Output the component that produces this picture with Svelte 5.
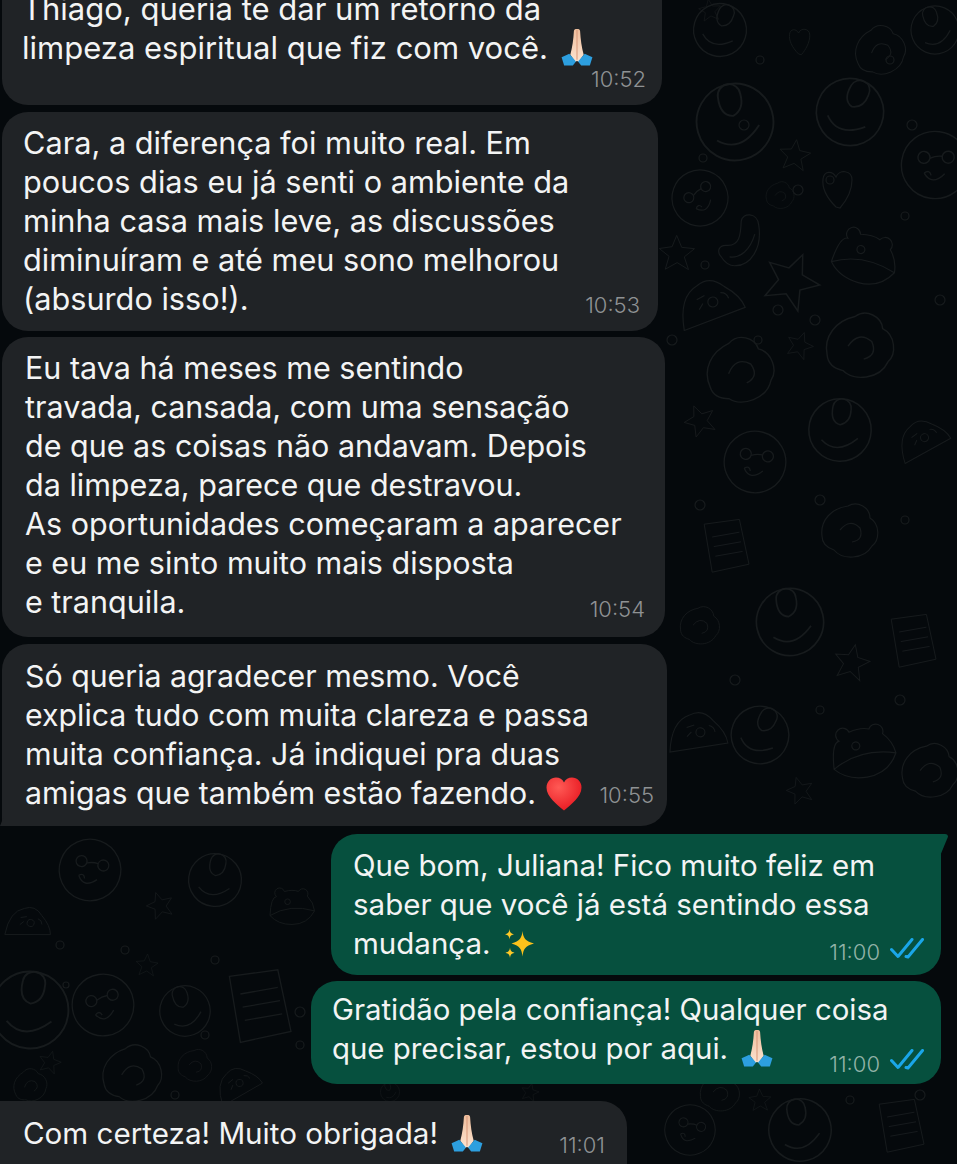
<script>
	// layout of each message comes from the data, only the doodles are placed freely
	const messages = [
		{ lines: ['Thiago, queria te dar um retorno da', 'limpeza espiritual que fiz com você.'], emoji: 'pray', time: '10:52', cls: 'm1' },
		{ lines: ['Cara, a diferença foi muito real. Em', 'poucos dias eu já senti o ambiente da', 'minha casa mais leve, as discussões', 'diminuíram e até meu sono melhorou', '(absurdo isso!).'], time: '10:53', cls: 'm2' },
		{ lines: ['Eu tava há meses me sentindo', 'travada, cansada, com uma sensação', 'de que as coisas não andavam. Depois', 'da limpeza, parece que destravou.', 'As oportunidades começaram a aparecer', 'e eu me sinto muito mais disposta', 'e tranquila.'], time: '10:54', cls: 'm3' },
		{ lines: ['Só queria agradecer mesmo. Você', 'explica tudo com muita clareza e passa', 'muita confiança. Já indiquei pra duas', 'amigas que também estão fazendo.'], emoji: 'heart', time: '10:55', cls: 'm4' },
		{ lines: ['Que bom, Juliana! Fico muito feliz em', 'saber que você já está sentindo essa', 'mudança.'], emoji: 'spark', time: '11:00', out: true, cls: 'm5' },
		{ lines: ['Gratidão pela confiança! Qualquer coisa', 'que precisar, estou por aqui.'], emoji: 'pray', time: '11:00', out: true, cls: 'm6' },
		{ lines: ['Com certeza! Muito obrigada!'], emoji: 'pray', time: '11:01', cls: 'm7' }
	];

	const doodles = [
		['face', 700, 198, 1], ['heart', 838, 187, 1], ['star', 677, 253, 0.8], ['macaroni', 748, 240, 1],
		['star', 792, 280, 1.25], ['bear', 863, 255, 1], ['dome', 713, 305, 1], ['ring', 735, 122, 1.6],
		['ring', 850, 112, 1.4], ['face', 935, 165, 1.2], ['blob', 860, 345, 1.2], ['blob', 740, 370, 1.2],
		['star', 800, 345, 0.6], ['star', 795, 155, 0.7], ['blob', 780, 195, 0.5], ['blob', 880, 50, 0.9],
		['ring', 720, 30, 1.1], ['heart', 800, 40, 0.7], ['star', 710, 10, 0.5], ['ring', 935, 30, 1],
		['face', 755, 462, 1.1], ['ring', 840, 430, 1.3], ['dome', 925, 440, 0.8], ['star', 700, 420, 0.7],
		['note', 725, 545, 0.8], ['blob', 850, 530, 1], ['ring', 790, 622, 1.4], ['note', 912, 640, 0.8],
		['star', 852, 662, 0.8], ['blob', 700, 625, 0.7], ['bear', 860, 750, 1], ['ring', 760, 735, 1.2],
		['dome', 700, 735, 0.9], ['blob', 930, 770, 1], ['star', 800, 790, 0.6],
		['face', 90, 870, 1.1], ['ring', 215, 880, 1.1], ['bear', 290, 905, 0.7], ['star', 160, 905, 0.6],
		['dome', 30, 925, 0.7], ['ring', 30, 1010, 1.6], ['face', 103, 1005, 1.1],
		['ring', 185, 1011, 1.05], ['note', 258, 1005, 1.1], ['star', 147, 965, 0.5], ['blob', 132, 1073, 1.05],
		['blob', 30, 1085, 0.6], ['star', 50, 1062, 0.5], ['blob', 195, 1065, 0.6], ['dome', 240, 1085, 0.7],
		['ring', 390, 1092, 0.4], ['star', 530, 1092, 0.4], ['blob', 720, 1092, 0.7], ['ring', 800, 1130, 1.3],
		['face', 690, 1130, 0.9], ['note', 900, 1125, 0.8], ['star', 760, 1100, 0.5]
	];
	const dots = [
		[798, 190, 5], [703, 158, 4], [744, 125, 5], [830, 180, 4], [758, 340, 4], [778, 310, 5],
		[705, 265, 4], [940, 300, 5], [905, 216, 4], [912, 125, 5], [672, 340, 5], [815, 320, 5],
		[890, 60, 4], [760, 60, 4], [700, 505, 5], [820, 500, 5], [905, 520, 4], [735, 680, 5],
		[820, 710, 4], [900, 700, 5], [60, 945, 4], [125, 950, 4], [205, 1035, 4], [300, 1012, 5],
		[300, 1045, 4], [215, 960, 4], [66, 985, 3], [175, 1095, 4], [850, 1100, 4], [920, 1095, 5]
	];
	const tilt = (i) => (i * 37) % 50 - 25;
</script>

{#snippet emoji(name)}
	{#if name === 'pray'}
		<svg class="emoji pray" viewBox="0 0 32 36" aria-hidden="true">
			<defs>
				<linearGradient id="skin" x1="0" y1="0" x2="0" y2="1">
					<stop offset="0" stop-color="#eebd9b" />
					<stop offset="1" stop-color="#fce3d0" />
				</linearGradient>
			</defs>
			<path d="M16 0c-1.500 0-2.800 .3-3 2C12.500 10 11.500 18 9.500 25L14.500 32l1.500-1z" fill="url(#skin)" />
			<path d="M16 0c1.500 0 2.800 .3 3 2C19.500 10 20.500 18 22.500 25L17.500 32l-1.500-1z" fill="url(#skin)" />
			<path d="M16 1v29" stroke="#d8987a" stroke-width="1" />
			<path d="M1 27.500L8.500 24l6.500 7.500-3 4H3.500z" fill="#2d9fdf" />
			<path d="M31 27.500L23.500 24 17 31.500l3 4h8.500z" fill="#2d9fdf" />
		</svg>
	{:else if name === 'heart'}
		<svg class="emoji heart" viewBox="0 0 36 34" aria-hidden="true">
			<defs>
				<radialGradient id="red" cx=".35" cy=".3" r=".85">
					<stop offset="0" stop-color="#ff5a55" />
					<stop offset="1" stop-color="#e5111b" />
				</radialGradient>
			</defs>
			<path d="M18 33.500C11 27.500 .5 20 .5 10.500.5 4.500 5 .5 10 .5c3.500 0 6.500 1.800 8 5 1.500-3.200 4.500-5 8-5 5 0 9.500 4 9.500 10 0 9.500-10.500 17-17.500 23z" fill="url(#red)" />
		</svg>
	{:else}
		<svg class="emoji spark" viewBox="0 0 32 32" aria-hidden="true">
			<path d="M19.500 3c.8 7 2.500 10 11.500 12.500-9 2.500-10.700 5.500-11.500 13-.8-7.500-2.500-10.500-11-13 8.500-2.500 10.200-5.500 11-12.500z" fill="#fcc21b" />
			<path d="M6.500 1c.4 3 1 4.300 4.500 5.300-3.500 1-4.100 2.200-4.500 5.200-.4-3-1-4.200-4.500-5.200 3.500-1 4.100-2.300 4.500-5.300zM7 19.500c.4 3 1.100 4.200 4.500 5.200-3.400 1-4.100 2.200-4.500 5.300-.4-3.100-1.100-4.300-4.500-5.300 3.400-1 4.100-2.200 4.500-5.200z" fill="#fdc928" />
		</svg>
	{/if}
{/snippet}

<div class="chat">
	<svg class="wallpaper" width="957" height="1164" aria-hidden="true">
		<defs>
			<g id="face"><circle r="28" /><circle cx="-10" cy="-5" r="5" /><circle cx="10" cy="-8" r="5" /><path d="M-5-5Q0-8 5-8M-8 8Q0 18 9 6M-8 8Q-4 4-2 9" /></g>
			<g id="heart"><path d="M-2 20C-12 10-16 0-15-8c1-8 9-9 13-2 3-8 16-7 16 3C14 4 8 14 2 21z" /></g>
			<g id="star"><path d="M0-22L6-7 22-5 9 5 14 21 0 12-15 20-10 4-22-6-6-8z" /></g>
			<g id="macaroni"><path d="M-30 10c-4-8 2-12 8-10 12 4 16-6 20-20 3-8 18-5 16 8C12 12-4 25-18 22c-6-1-10-6-12-12zM-22 12c10 4 22-2 30-16" /></g>
			<g id="bear"><path d="M-30 12Q-26-14-18-14A7 7 0 1 1-6-20Q6-22 14-18A7 7 0 1 1 26-10Q34 0 34 12 22 30 0 28-20 26-30 12zM-30 12Q0-2 34 12" /><circle cx="-3" cy="-5" r="4" /></g>
			<g id="dome"><path d="M-30 24Q-34-10-15-20-2-30 12-18 28-8 32 4z" /><circle cx="0" cy="-3" r="5" /><path d="M-16-6l8-4M-14 4l4-6M8-12q6 0 8 6" /></g>
			<g id="ring"><circle r="24" /><path d="M-14 8Q-2 20 14 6M-6-18A6 6 0 0 1 8-16Q8-6 0-4-8-6-6-18z" /></g>
			<g id="blob"><path d="M-28 6C-30-10-18-22-2-24 8-30 20-22 20-12 30-6 30 10 22 16 14 30-8 30-16 20-22 18-28 14-28 6zM-10 0Q0-12 10-2 14 10 2 12" /></g>
			<g id="note"><path d="M-26-26L18-32 30 24-16 34zM-16-10L18-16M-14 2L20-4M-12 14L22 8" /></g>
		</defs>
		<g class="lines">
			{#each doodles as [name, x, y, size], i}
				<use href="#{name}" transform="translate({x} {y}) rotate({name === 'note' || name === 'heart' ? 0 : tilt(i)}) scale({size})" />
			{/each}
			{#each dots as [x, y, r]}
				<circle cx={x} cy={y} {r} />
			{/each}
		</g>
	</svg>

	<div class="list">
		{#each messages as msg}
			<div class="bubble {msg.cls}" class:out={msg.out}>
				{#each msg.lines as line, i}
					{#if i < msg.lines.length - 1 || msg.cls === 'm1'}
						<div class="line">
							{line}
							{#if msg.cls === 'm1' && i === 1}{@render emoji(msg.emoji)}{/if}
						</div>
					{:else}
						<div class="line last">
							<span class="body">{line}{#if msg.emoji}{@render emoji(msg.emoji)}{/if}</span>
							<span class="meta">
								<span class="time">{msg.time}</span>
								{#if msg.out}
									<svg class="ticks" viewBox="0 0 34 21" aria-hidden="true">
										<path d="M1.500 11.500L8 18.500 22 1.500M16 18.500l2 .5 14.500-17.500" />
									</svg>
								{/if}
							</span>
						</div>
					{/if}
				{/each}
				{#if msg.cls === 'm1'}
					<div class="meta solo"><span class="time">{msg.time}</span></div>
				{/if}
			</div>
		{/each}
	</div>
</div>

<style>
	:global(body) {
		background: #05090c;
	}
	.chat {
		position: relative;
		width: 957px;
		height: 1164px;
		overflow: hidden;
		background: #05090c;
		font-family: Inter, "Liberation Sans", sans-serif;
		color: #f3f4f4;
	}
	.wallpaper {
		position: absolute;
		left: 0;
		top: 0;
	}
	.lines {
		fill: none;
		stroke: #171b1d;
		stroke-width: 1.2;
	}
	.list {
		position: relative;
		display: flex;
		flex-direction: column;
		margin-top: -30px;
	}
	.bubble {
		position: relative;
		background: #202326;
		border-radius: 26px;
		margin-left: 2px;
		line-height: 39px;
		box-sizing: border-box;
	}
	.line {
		white-space: nowrap;
	}
	.last {
		display: flex;
		justify-content: space-between;
	}
	.body {
		display: flex;
		align-items: center;
	}
	.meta {
		display: flex;
		align-items: center;
		gap: 10px;
	}
	.time {
		font-size: 22px;
		font-weight: 300;
		line-height: 26px;
		color: #8f9294;
		position: relative;
		top: 8px;
	}
	.solo {
		justify-content: flex-end;
		margin-top: -1px;
	}
	.solo .time {
		top: 0;
	}
	.out {
		background: #06503e;
		align-self: flex-end;
		margin-left: 0;
	}
	.out .time {
		color: #92b3a8;
	}
	.emoji {
		display: inline-block;
		flex: none;
	}
	.pray {
		width: 34px;
		height: 37px;
		vertical-align: -7px;
		margin-left: 10px;
	}
	.heart {
		width: 36px;
		height: 34px;
		margin-left: 10px;
	}
	.spark {
		width: 32px;
		height: 32px;
		margin-left: 12px;
	}
	.ticks {
		width: 34px;
		height: 21px;
		position: relative;
		top: 5px;
		fill: none;
		stroke: #1aa6e8;
		stroke-width: 3;
		stroke-linecap: round;
		stroke-linejoin: round;
	}

	.m1 { font-size: 31px; width: 660px; height: 135px; padding: 19px 16px 0 20px; }
	.m1 .pray { margin-left: 3px; }
	.m2 { font-size: 30.7px; width: 656px; height: 219px; margin-top: 7px; padding: 11px 18px 0 21px; }
	.m2 .time { top: 6px; }
	.m3 { font-size: 30.5px; width: 663px; height: 300px; margin-top: 6px; padding: 11px 20px 0 23px; }
	.m3 .time { top: 7px; }
	.m4 { font-size: 30.3px; width: 665px; height: 182px; margin-top: 7px; padding: 13px 13px 0 23px; border-bottom-left-radius: 0; }
	.m4 .time { top: 1px; }
	.m4::after {
		content: "";
		position: absolute;
		left: -2px;
		bottom: 0;
		width: 4px;
		height: 10px;
		background: #202326;
		clip-path: polygon(100% 0, 100% 100%, 0 100%);
	}
	.m5 { font-size: 29.5px; width: 610px; height: 141px; margin-top: 8px; margin-right: 16px; padding: 12px 17px 0 22px; border-top-right-radius: 0; }
	.m5::after {
		content: "";
		position: absolute;
		right: -7px;
		top: 0;
		width: 8px;
		height: 22px;
		background: #06503e;
		border-top-right-radius: 3px;
		clip-path: polygon(0 0, 100% 0, 100% 12%, 0 100%);
	}
	.m6 { font-size: 29.4px; width: 630px; height: 103px; margin-top: 6px; margin-right: 16px; padding: 9px 17px 0 21px; }
	.m6 .time { top: 15px; }
	.m6 .ticks { top: 11px; }
	.m6 .pray { margin-left: 12px; }
	.m7 { font-size: 29.6px; width: 627px; height: 90px; margin-top: 17px; margin-left: 0; padding: 13px 22px 0 23px; border-top-left-radius: 0; }
	.m7 .time { top: 11px; }
	.m7 .pray { margin-left: 12px; }
</style>
